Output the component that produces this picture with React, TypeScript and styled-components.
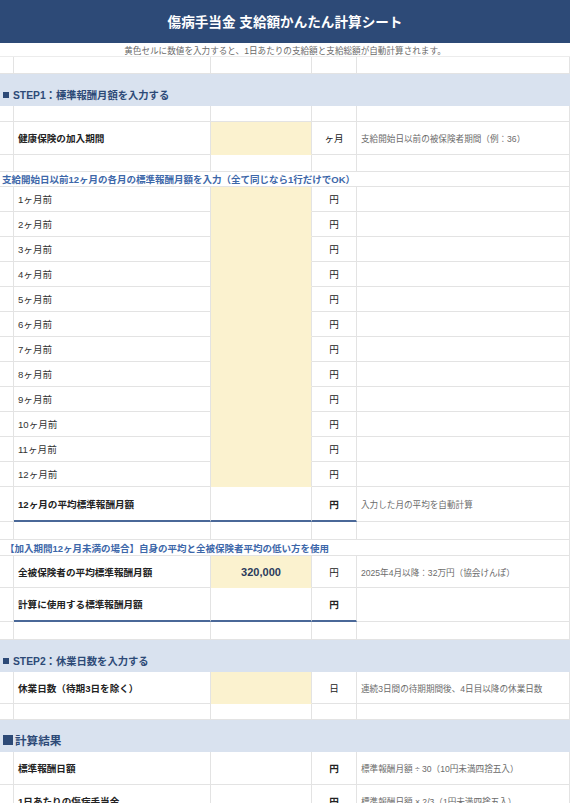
import React from "react";
import styled, { createGlobalStyle, css } from "styled-components";

const GlobalStyle = createGlobalStyle`
  html, body { margin: 0; padding: 0; background: #ffffff; }
  body {
    font-family: "Liberation Sans", "Noto Sans CJK JP", sans-serif;
    color: #333333;
    overflow: hidden;
  }
  * { box-sizing: border-box; }
`;

const COLS = "14px 197px 101px 45px 213px";
const GRID = "#e3e3e3";
const NAVY = "#2d4a77";
const BLUE = "#3d67a9";
const YELLOW = "#fbf2cf";
const BAND = "#d9e2ef";
const RULE = "#4a6898";

const Sheet = styled.div`
  width: 572px;
  display: flex;
  flex-direction: column;
`;

const TitleBar = styled.div`
  height: 43px;
  width: 570px;
  background: ${NAVY};
  color: #ffffff;
  font-weight: 700;
  font-size: 13.6px;
  display: flex;
  align-items: center;
  justify-content: center;
  padding-bottom: 2px;
`;

const SubRow = styled.div`
  height: 14px;
  width: 570px;
  border-bottom: 1px solid #ececec;
  font-size: 8.6px;
  color: #6a6a6a;
  display: flex;
  align-items: center;
  justify-content: center;
`;

const Row = styled.div<{ $h: number }>`
  display: grid;
  grid-template-columns: ${COLS};
  height: ${(p) => p.$h}px;
  width: 570px;
  border-right: 1px solid ${GRID};
`;

const Cell = styled.div<{ $rule?: boolean; $fill?: boolean }>`
  border-right: 1px solid ${GRID};
  border-bottom: 1px solid ${GRID};
  display: flex;
  align-items: center;
  min-width: 0;
  white-space: nowrap;
  ${(p) => p.$fill && css`background: ${YELLOW};`}
  ${(p) =>
    p.$rule &&
    css`
      border-bottom: 2px solid ${RULE};
    `}
`;

const Gutter = styled(Cell)``;

const LabelCell = styled(Cell)<{ $bold?: boolean }>`
  padding-left: 4px;
  font-size: 9.6px;
  font-weight: ${(p) => (p.$bold ? 700 : 400)};
  color: ${(p) => (p.$bold ? "#222222" : "#333333")};
`;

const InputCell = styled(Cell)`
  justify-content: center;
  font-size: 11px;
  font-weight: 700;
  color: #2b3b5c;
  ${(p) => p.$fill && css`border-bottom-color: ${YELLOW};`}
`;

const UnitCell = styled(Cell)<{ $bold?: boolean }>`
  justify-content: center;
  font-size: 9.6px;
  font-weight: ${(p) => (p.$bold ? 700 : 400)};
  color: #222222;
`;

const NoteCell = styled(Cell)`
  padding-left: 4px;
  font-size: 8.6px;
  color: #6b6b6b;
  border-right: none;
`;

const BandRow = styled.div<{ $h: number }>`
  height: ${(p) => p.$h}px;
  width: 570px;
  background: ${BAND};
  display: flex;
  align-items: flex-end;
  padding: 0 0 4px 3px;
  color: ${NAVY};
  font-weight: 700;
`;

const BandText = styled.span<{ $big?: boolean }>`
  font-size: ${(p) => (p.$big ? "11.6px" : "10.3px")};
  display: flex;
  align-items: center;
  gap: ${(p) => (p.$big ? "2px" : "4px")};
`;

const Square = styled.span<{ $big?: boolean }>`
  display: inline-block;
  width: ${(p) => (p.$big ? "10px" : "6px")};
  height: ${(p) => (p.$big ? "10px" : "6px")};
  background: ${NAVY};
`;

const CaptionRow = styled.div<{ $h: number; $indent?: number }>`
  height: ${(p) => p.$h}px;
  width: 570px;
  border-bottom: 1px solid ${GRID};
  border-right: 1px solid ${GRID};
  display: flex;
  align-items: center;
  padding-left: ${(p) => p.$indent ?? 2}px;
  font-size: 9.5px;
  font-weight: 700;
  color: ${BLUE};
  white-space: nowrap;
`;

const Blank = ({ h }: { h: number }) => (
  <Row $h={h}>
    <Gutter />
    <Cell />
    <Cell />
    <Cell />
    <NoteCell />
  </Row>
);

type DataProps = {
  h: number;
  label: string;
  bold?: boolean;
  fill?: boolean;
  value?: string;
  unit: string;
  note?: string;
  rule?: boolean;
};

const DataRow = ({ h, label, bold, fill, value, unit, note, rule }: DataProps) => (
  <Row $h={h}>
    <Gutter />
    <LabelCell $bold={bold} $rule={rule}>
      {label}
    </LabelCell>
    <InputCell $fill={fill} $rule={rule}>
      {value}
    </InputCell>
    <UnitCell $bold={bold && !fill} $rule={rule}>
      {unit}
    </UnitCell>
    <NoteCell>{note}</NoteCell>
  </Row>
);

const months = Array.from({ length: 12 }, (_, i) => `${i + 1}ヶ月前`);

export default function App() {
  return (
    <>
      <GlobalStyle />
      <Sheet>
        <TitleBar>傷病手当金 支給額かんたん計算シート</TitleBar>
        <SubRow>黄色セルに数値を入力すると、1日あたりの支給額と支給総額が自動計算されます。</SubRow>
        <Blank h={17} />
        <BandRow $h={32}>
          <BandText>
            <Square />
            STEP1：標準報酬月額を入力する
          </BandText>
        </BandRow>
        <Blank h={16} />
        <DataRow
          h={33}
          label="健康保険の加入期間"
          bold
          fill
          unit="ヶ月"
          note="支給開始日以前の被保険者期間（例：36）"
        />
        <Blank h={17} />
        <CaptionRow $h={15}>
          支給開始日以前12ヶ月の各月の標準報酬月額を入力（全て同じなら1行だけでOK）
        </CaptionRow>
        {months.map((m) => (
          <DataRow key={m} h={25} label={m} fill unit="円" />
        ))}
        <DataRow
          h={35}
          label="12ヶ月の平均標準報酬月額"
          bold
          unit="円"
          note="入力した月の平均を自動計算"
          rule
        />
        <Blank h={18} />
        <CaptionRow $h={16} $indent={5}>
          【加入期間12ヶ月未満の場合】自身の平均と全被保険者平均の低い方を使用
        </CaptionRow>
        <DataRow
          h={32}
          label="全被保険者の平均標準報酬月額"
          bold
          fill
          value="320,000"
          unit="円"
          note="2025年4月以降：32万円（協会けんぽ）"
        />
        <DataRow h={34} label="計算に使用する標準報酬月額" bold unit="円" rule />
        <Blank h={18} />
        <BandRow $h={32}>
          <BandText>
            <Square />
            STEP2：休業日数を入力する
          </BandText>
        </BandRow>
        <DataRow
          h={32}
          label="休業日数（待期3日を除く）"
          bold
          fill
          unit="日"
          note="連続3日間の待期期間後、4日目以降の休業日数"
        />
        <Blank h={16} />
        <BandRow $h={32}>
          <BandText $big>
            <Square $big />
            計算結果
          </BandText>
        </BandRow>
        <DataRow
          h={33}
          label="標準報酬日額"
          bold
          unit="円"
          note="標準報酬月額 ÷ 30（10円未満四捨五入）"
        />
        <DataRow
          h={33}
          label="1日あたりの傷病手当金"
          bold
          unit="円"
          note="標準報酬日額 × 2/3（1円未満四捨五入）"
        />
      </Sheet>
    </>
  );
}
